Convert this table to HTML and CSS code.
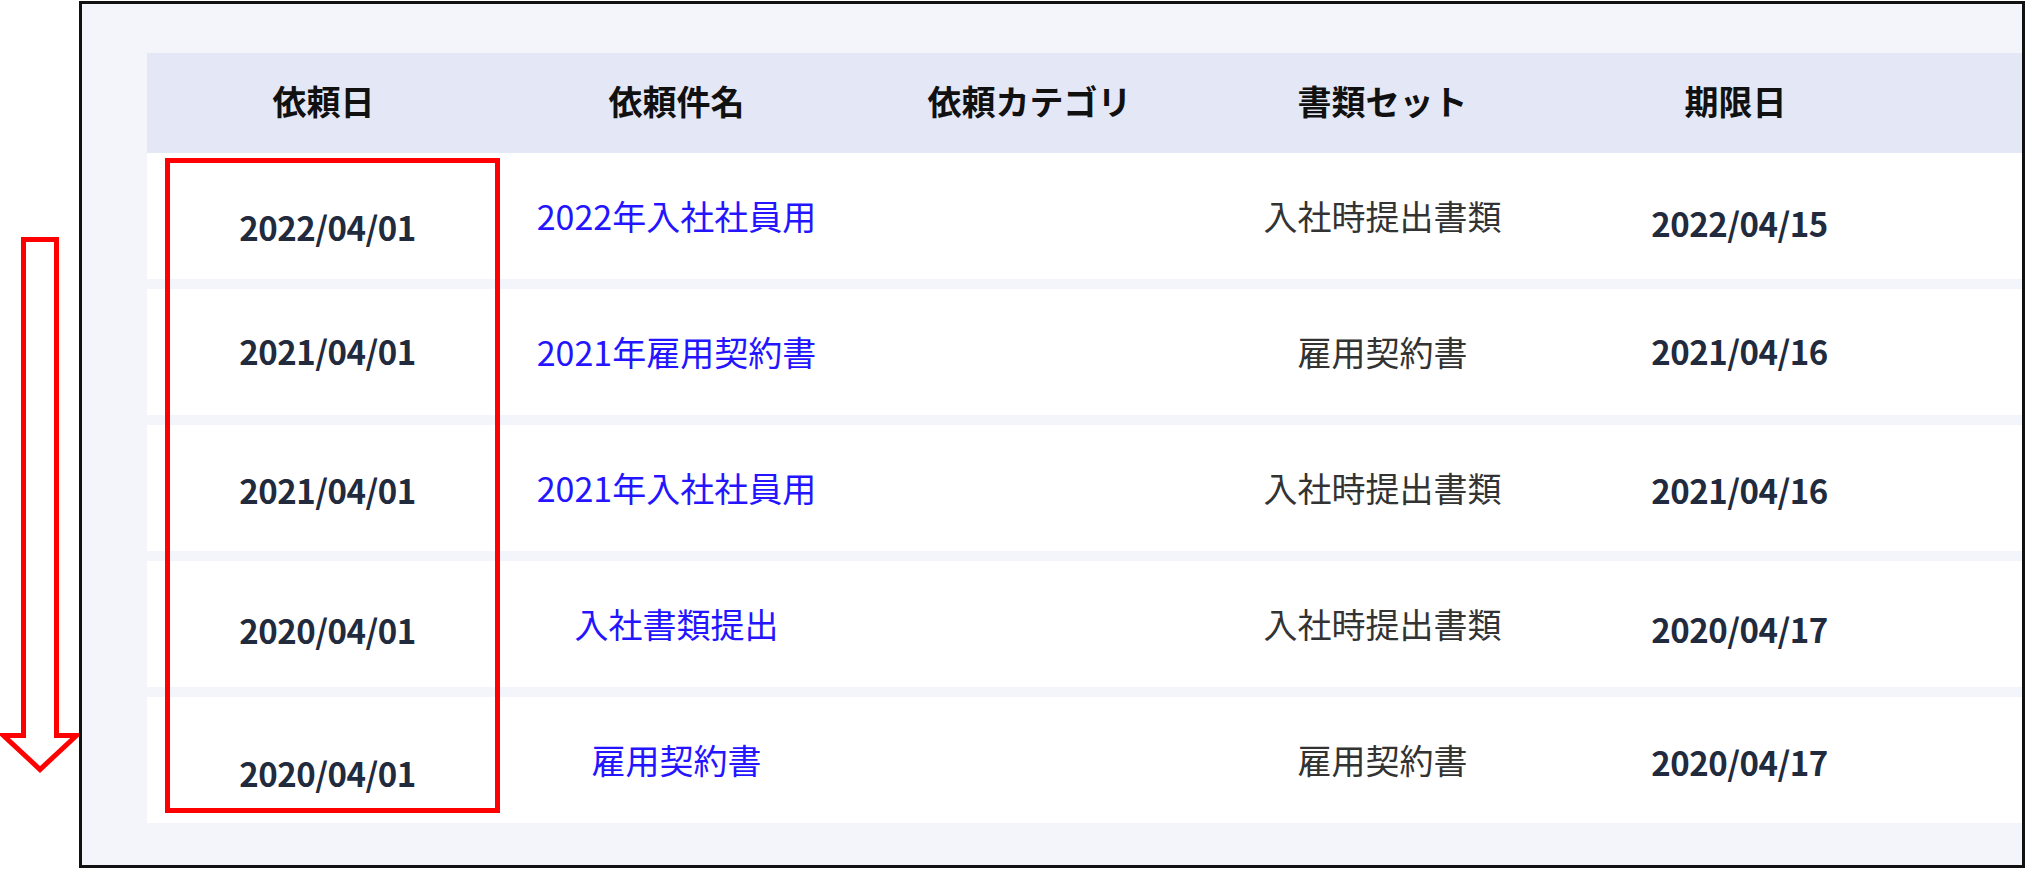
FILE: index.html
```html
<!DOCTYPE html>
<html lang="ja">
<head>
<meta charset="utf-8">
<title>依頼一覧</title>
<link rel="stylesheet" href="styles.css">
</head>
<body>
<div class="stage">
  <svg class="arrow" width="82" height="780" viewBox="0 0 82 780" aria-hidden="true">
    <path d="M23.5 239.5 H56.5 V735.5 H76.5 L40 769.5 L3.5 735.5 H23.5 Z" fill="#fff" stroke="#ff0000" stroke-width="5" stroke-linejoin="miter"/>
  </svg>
  <div class="frame">
    <div class="table">
      <div class="row head">
        <div class="cell">依頼日</div>
        <div class="cell">依頼件名</div>
        <div class="cell">依頼カテゴリ</div>
        <div class="cell">書類セット</div>
        <div class="cell">期限日</div>
        <div class="cell"></div>
      </div>
      <div class="body">
        <div class="row">
          <div class="cell date p24">2022/04/01</div>
          <div class="cell"><a class="link" href="#">2022年入社社員用</a></div>
          <div class="cell"></div>
          <div class="cell text">入社時提出書類</div>
          <div class="cell date p16">2022/04/15</div>
          <div class="cell"></div>
        </div>
        <div class="row">
          <div class="cell date p0">2021/04/01</div>
          <div class="cell"><a class="link" href="#">2021年雇用契約書</a></div>
          <div class="cell"></div>
          <div class="cell text">雇用契約書</div>
          <div class="cell date p0">2021/04/16</div>
          <div class="cell"></div>
        </div>
        <div class="row">
          <div class="cell date p6">2021/04/01</div>
          <div class="cell"><a class="link" href="#">2021年入社社員用</a></div>
          <div class="cell"></div>
          <div class="cell text">入社時提出書類</div>
          <div class="cell date p6">2021/04/16</div>
          <div class="cell"></div>
        </div>
        <div class="row">
          <div class="cell date p14">2020/04/01</div>
          <div class="cell"><a class="link" href="#">入社書類提出</a></div>
          <div class="cell"></div>
          <div class="cell text">入社時提出書類</div>
          <div class="cell date p12">2020/04/17</div>
          <div class="cell"></div>
        </div>
        <div class="row">
          <div class="cell date p28">2020/04/01</div>
          <div class="cell"><a class="link" href="#">雇用契約書</a></div>
          <div class="cell"></div>
          <div class="cell text">雇用契約書</div>
          <div class="cell date p6">2020/04/17</div>
          <div class="cell"></div>
        </div>
      </div>
    </div>
    <div class="highlight"></div>
  </div>
</div>
</body>
</html>
```

FILE: styles.css
```css
html, body {
  margin: 0;
  padding: 0;
  background: #ffffff;
}

body {
  font-family: "Noto Sans CJK JP", "Noto Sans", sans-serif;
}

.stage {
  position: relative;
  width: 2026px;
  height: 869px;
  padding-top: 1px;
  box-sizing: border-box;
}

.arrow {
  position: absolute;
  left: 0;
  top: 0;
}

.frame {
  position: relative;
  margin-left: 79px;
  width: 1946px;
  height: 867px;
  box-sizing: border-box;
  border: 3px solid #111111;
  background: #f4f5fa;
  padding: 49px 0 0 65px;
  overflow: hidden;
}

.table {
  display: flex;
  flex-direction: column;
  width: 2118px;
}

.body {
  display: flex;
  flex-direction: column;
  gap: 10px;
}

.row {
  display: grid;
  grid-template-columns: repeat(6, 353px);
  height: 126px;
  background: #ffffff;
  align-items: center;
  justify-items: center;
}

.row.head {
  height: 100px;
  background: #e4e8f6;
}

.cell {
  font-size: 34px;
  line-height: 1.2;
  white-space: nowrap;
}

.head .cell {
  font-weight: 700;
  color: #111111;
  padding-bottom: 4px;
}

.date {
  font-size: 33px;
  font-weight: 600;
  letter-spacing: -0.5px;
  color: #222b3d;
  padding-left: 8px;
}

.date.p0 { padding-top: 0; }
.date.p6 { padding-top: 6px; }
.date.p12 { padding-top: 12px; }
.date.p14 { padding-top: 14px; }
.date.p16 { padding-top: 16px; }
.date.p24 { padding-top: 24px; }
.date.p28 { padding-top: 28px; }

.link {
  color: #2414ff;
  text-decoration: none;
  font-weight: 400;
}

.text {
  color: #333333;
  font-weight: 400;
}

.highlight {
  position: absolute;
  left: 83px;
  top: 154px;
  width: 335px;
  height: 655px;
  box-sizing: border-box;
  border: 5px solid #ff0000;
}
```
